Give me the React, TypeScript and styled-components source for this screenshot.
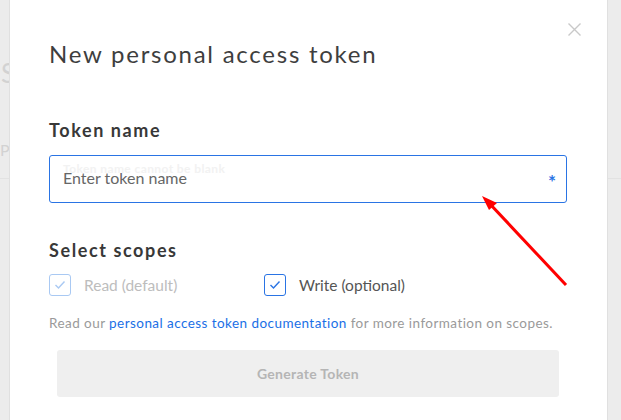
import React from "react";
import styled, { createGlobalStyle } from "styled-components";

const Global = createGlobalStyle`
  html, body { margin: 0; padding: 0; }
  body {
    background: #ececec;
    font-family: Lato, "Open Sans", sans-serif;
    overflow: hidden;
  }
  * { box-sizing: border-box; }
`;

const Page = styled.div`
  position: relative;
  width: 621px;
  height: 420px;
  overflow: hidden;
  background: #ececec;
`;

const Backdrop = styled.div`
  display: flex;
  flex-direction: column;
  padding: 58px 0 0 0;
  color: #d2d2d2;
`;

const BackHeading = styled.div`
  font-size: 26px;
  line-height: 30px;
  margin-left: 1px;
`;

const BackLine = styled.div`
  font-size: 16px;
  line-height: 20px;
  margin-top: 52px;
  padding-bottom: 18px;
  border-bottom: 1px solid #e2e2e2;
`;

const Modal = styled.div`
  position: absolute;
  top: 0;
  left: 9px;
  width: 599px;
  height: 440px;
  background: #fff;
  border-left: 1px solid #e0e0e0;
  border-right: 1px solid #e0e0e0;
  padding: 40px 40px 0 39px;
  display: flex;
  flex-direction: column;
`;

const CloseButton = styled.button`
  position: absolute;
  top: 22px;
  right: 25px;
  width: 15px;
  height: 15px;
  padding: 0;
  border: none;
  background: none;
  display: flex;
`;

const Title = styled.h1`
  margin: 0;
  font-size: 24px;
  line-height: 28px;
  font-weight: 400;
  color: #3e3e3e;
  letter-spacing: 1.75px;
`;

const SectionLabel = styled.h2<{ $top: number }>`
  margin: ${(p) => p.$top}px 0 0 0;
  font-size: 18px;
  line-height: 22px;
  font-weight: 700;
  color: #383838;
  letter-spacing: 1.6px;
`;

const InputWrap = styled.div`
  position: relative;
  margin-top: 14px;
  height: 48px;
  border: 1px solid #2a74e4;
  border-radius: 3px;
  display: flex;
  align-items: center;
  padding: 0 10px 0 13px;
`;

const GhostHint = styled.span`
  position: absolute;
  left: 13px;
  top: 5px;
  font-size: 12px;
  font-weight: 700;
  letter-spacing: 0.4px;
  color: #f2f2f2;
`;

const TokenInput = styled.input`
  flex: 1;
  border: none;
  outline: none;
  padding: 0;
  margin-bottom: 4px;
  font-family: inherit;
  font-size: 16px;
  color: #333;
  background: transparent;
  &::placeholder { color: #666; }
`;

const Required = styled.span`
  color: #2a74e4;
  font-size: 19px;
  font-weight: 700;
  line-height: 19px;
  margin-top: 4px;
`;

const ScopeRow = styled.div`
  margin-top: 13px;
  display: grid;
  grid-template-columns: 215px 1fr;
`;

const Scope = styled.label<{ $disabled?: boolean }>`
  display: flex;
  align-items: center;
  gap: 13px;
  font-size: 15.5px;
  line-height: 22px;
  color: ${(p) => (p.$disabled ? "#bdbdbd" : "#555")};
`;

const Box = styled.span<{ $disabled?: boolean }>`
  width: 22px;
  height: 22px;
  border-radius: 3px;
  border: 1px solid ${(p) => (p.$disabled ? "#a9c9f3" : "#2a74e4")};
  display: flex;
  align-items: center;
  justify-content: center;
  color: ${(p) => (p.$disabled ? "#a9c9f3" : "#2a74e4")};
`;

const Help = styled.p`
  margin: 18px 0 0 0;
  font-size: 13.5px;
  line-height: 18px;
  letter-spacing: 0.44px;
  color: #9a9a9a;
  white-space: nowrap;
`;

const Link = styled.a`
  color: #1a6fe6;
  text-decoration: none;
`;

const GenerateButton = styled.button`
  margin: 18px 8px 0 8px;
  height: 47px;
  border: none;
  border-radius: 3px;
  background: #efefef;
  color: #b5b5b5;
  font-family: inherit;
  font-size: 14px;
  font-weight: 700;
  letter-spacing: 0.3px;
`;

const Overlay = styled.svg`
  position: absolute;
  top: 0;
  left: 0;
  pointer-events: none;
`;

const Check = () => (
  <svg width="12" height="10" viewBox="0 0 12 10">
    <polyline points="1.5,5 4.5,8 10.5,1.5" fill="none" stroke="currentColor" strokeWidth="1.4" />
  </svg>
);

export default function App() {
  return (
    <Page>
      <Global />
      <Backdrop>
        <BackHeading>Se</BackHeading>
        <BackLine>Pe</BackLine>
      </Backdrop>
      <Modal>
        <CloseButton aria-label="Close">
          <svg width="15" height="15" viewBox="0 0 15 15">
            <path d="M1.5 1.5 L13.5 13.5 M13.5 1.5 L1.5 13.5" stroke="#c9c9c9" strokeWidth="1.4" />
          </svg>
        </CloseButton>
        <Title>New personal access token</Title>
        <SectionLabel $top={51}>Token name</SectionLabel>
        <InputWrap>
          <GhostHint>Token name cannot be blank</GhostHint>
          <TokenInput placeholder="Enter token name" />
          <Required>*</Required>
        </InputWrap>
        <SectionLabel $top={36}>Select scopes</SectionLabel>
        <ScopeRow>
          <Scope $disabled>
            <Box $disabled><Check /></Box>
            Read (default)
          </Scope>
          <Scope>
            <Box><Check /></Box>
            Write (optional)
          </Scope>
        </ScopeRow>
        <Help>
          Read our <Link href="#">personal access token documentation</Link> for more information on scopes.
        </Help>
        <GenerateButton>Generate Token</GenerateButton>
      </Modal>
      <Overlay width="621" height="420" viewBox="0 0 621 420">
        <line x1="566" y1="285" x2="490" y2="204" stroke="#f00" strokeWidth="3" />
        <polygon points="482,196 497,203 489,210" fill="#f00" />
      </Overlay>
    </Page>
  );
}
